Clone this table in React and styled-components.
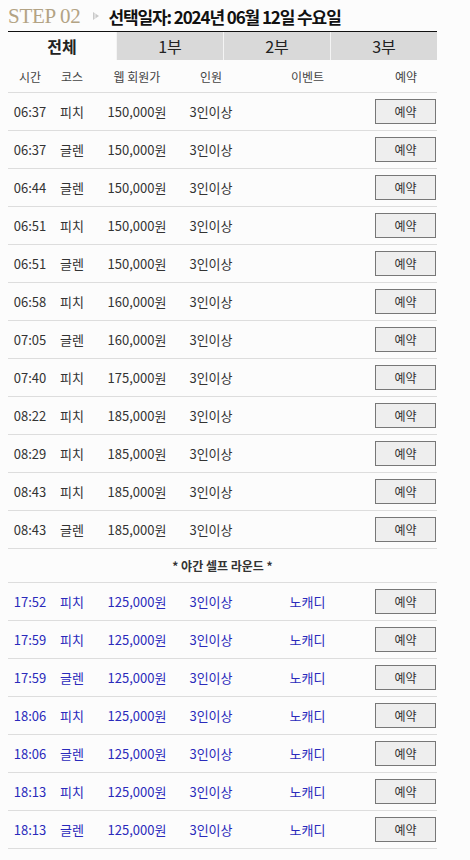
import styled, { createGlobalStyle, css } from 'styled-components';

const GlobalStyle = createGlobalStyle`
  html, body {
    margin: 0;
    padding: 0;
    background: #fcfcfc;
  }
  body {
    font-family: "Noto Sans CJK KR", "Noto Sans", sans-serif;
    color: #333;
  }
`;

const dayTimes = [
  ['06:37', '피치', '150,000원'],
  ['06:37', '글렌', '150,000원'],
  ['06:44', '글렌', '150,000원'],
  ['06:51', '피치', '150,000원'],
  ['06:51', '글렌', '150,000원'],
  ['06:58', '피치', '160,000원'],
  ['07:05', '글렌', '160,000원'],
  ['07:40', '피치', '175,000원'],
  ['08:22', '피치', '185,000원'],
  ['08:29', '피치', '185,000원'],
  ['08:43', '피치', '185,000원'],
  ['08:43', '글렌', '185,000원'],
];

const nightTimes = [
  ['17:52', '피치'],
  ['17:59', '피치'],
  ['17:59', '글렌'],
  ['18:06', '피치'],
  ['18:06', '글렌'],
  ['18:13', '피치'],
  ['18:13', '글렌'],
];

const tabs = ['전체', '1부', '2부', '3부'];

const App = () => {
  return (
    <>
      <GlobalStyle />
      <Page>
        <TitleBar>
          <Step>STEP 02</Step>
          <Arrow width="8" height="10" viewBox="0 0 8 10">
            <path d="M1 1 L7 5 L1 9 Z" fill="#c9c9c9" />
            <path d="M3 2.3 V7.7" stroke="#fff" strokeWidth="0.8" />
          </Arrow>
          <DateTitle>선택일자: 2024년 06월 12일 수요일</DateTitle>
        </TitleBar>

        <Tabs>
          {tabs.map((tab, i) => (
            <Tab key={tab} active={i === 0}>{tab}</Tab>
          ))}
        </Tabs>

        <HeadRow>
          <span>시간</span>
          <span>코스</span>
          <span>웹 회원가</span>
          <span>인원</span>
          <span>이벤트</span>
          <span>예약</span>
        </HeadRow>

        {dayTimes.map(([time, course, price], i) => (
          <Row key={`d-${i}`}>
            <span>{time}</span>
            <span>{course}</span>
            <span>{price}</span>
            <span>3인이상</span>
            <span></span>
            <BookCell><BookButton>예약</BookButton></BookCell>
          </Row>
        ))}

        <NightLabel>* 야간 셀프 라운드 *</NightLabel>

        {nightTimes.map(([time, course], i) => (
          <Row key={`n-${i}`} night>
            <span>{time}</span>
            <span>{course}</span>
            <span>125,000원</span>
            <span>3인이상</span>
            <span>노캐디</span>
            <BookCell><BookButton>예약</BookButton></BookCell>
          </Row>
        ))}
      </Page>
    </>
  );
};

const Page = styled.div`
  width: 429px;
  padding: 0 8px;
`;

const TitleBar = styled.div`
  display: flex;
  align-items: center;
  height: 30px;
  padding-top: 1px;
  border-bottom: 1px solid #111;
`;

const Step = styled.span`
  font-family: "Liberation Serif", "Times New Roman", serif;
  font-size: 21px;
  color: #b3a384;
  letter-spacing: -0.3px;
`;

const Arrow = styled.svg`
  margin: 0 8px 0 12px;
`;

const DateTitle = styled.span`
  font-size: 17px;
  font-weight: 700;
  color: #111;
  letter-spacing: -1.1px;
`;

const Tabs = styled.div`
  display: grid;
  grid-template-columns: 108px 107px 107px 107px;
  height: 28px;
`;

const Tab = styled.div`
  display: flex;
  align-items: center;
  justify-content: center;
  font-size: 16px;
  color: #222;
  background: ${p => (p.active ? '#fcfcfc' : '#d9d9d9')};
  font-weight: ${p => (p.active ? 700 : 400)};
  border-left: ${p => (p.active ? 'none' : '1px solid #f4f4f4')};
`;

const columns = css`
  display: grid;
  grid-template-columns: 44px 40px 90px 58px 135px 62px;
  align-items: center;
  text-align: center;
  border-bottom: 1px solid #dddddd;
`;

const HeadRow = styled.div`
  ${columns};
  height: 31px;
  font-size: 12px;
  color: #444;
  padding-top: 1px;
`;

const Row = styled.div`
  ${columns};
  height: 37px;
  font-size: 13px;
  color: ${p => (p.night ? '#2a2abb' : '#333')};
`;

const BookCell = styled.div`
  display: flex;
  justify-content: flex-start;
`;

const BookButton = styled.button`
  width: 61px;
  height: 25px;
  padding: 0;
  border: 1px solid #777;
  background: #eeeeee;
  font-family: "Noto Sans CJK KR", sans-serif;
  font-size: 12px;
  color: #333;
  cursor: pointer;
`;

const NightLabel = styled.div`
  height: 33px;
  display: flex;
  align-items: center;
  justify-content: center;
  font-size: 12px;
  font-weight: 700;
  color: #333;
  border-bottom: 1px solid #dddddd;
`;

export default App;
